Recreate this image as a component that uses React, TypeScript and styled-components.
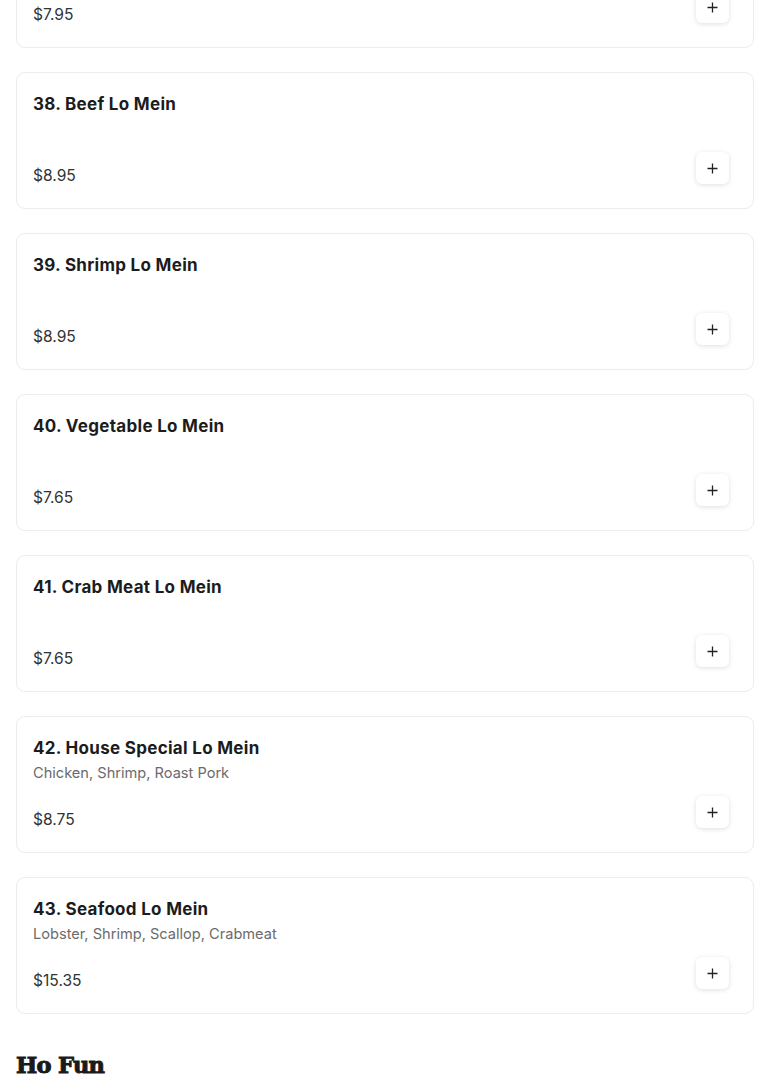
import React from "react";
import styled, { createGlobalStyle } from "styled-components";

const Global = createGlobalStyle`
  html, body { margin: 0; padding: 0; background: #fff; }
  body { font-family: "Inter", "Noto Sans", sans-serif; color: #222; overflow: hidden; }
`;

const Page = styled.div`
  padding: 0 16px;
  margin-top: -89px;
`;

const List = styled.div`
  display: flex;
  flex-direction: column;
  gap: 24px;
`;

const Card = styled.div`
  border: 1px solid #ececec;
  border-radius: 9px;
  background: #fff;
  padding: 19px 24px 24px 16px;
  display: flex;
  flex-direction: column;
`;

const Title = styled.h3`
  margin: 0;
  font-size: 17px;
  line-height: 24px;
  font-weight: 700;
  letter-spacing: 0.3px;
  color: #1c1c1c;
`;

const DescBox = styled.div`
  height: 36px;
  padding-top: 3px;
  box-sizing: border-box;
`;

const Desc = styled.p`
  margin: 0;
  font-size: 14.6px;
  line-height: 20px;
  color: #6b6b6b;
`;

const Row = styled.div`
  display: flex;
  justify-content: space-between;
  align-items: flex-start;
  height: 32px;
`;

const Price = styled.span`
  margin-top: 12px;
  font-size: 15.6px;
  line-height: 24px;
  color: #333;
`;

const AddButton = styled.button`
  width: 33px;
  height: 32px;
  border: none;
  border-radius: 6px;
  background: #fff;
  box-shadow: 0 1px 5px rgba(0, 0, 0, 0.13);
  display: flex;
  align-items: center;
  justify-content: center;
  padding: 0;
  cursor: pointer;
`;

const Section = styled.h2`
  margin: 24px 0 0;
  font-family: "DejaVu Serif", serif;
  font-weight: 700;
  font-size: 22.5px;
  line-height: 54px;
  letter-spacing: -0.7px;
  -webkit-text-stroke: 1px #1a1a1a;
  color: #1a1a1a;
`;

const items = [
  { name: "37. Chicken Lo Mein", desc: "", price: "$7.95" },
  { name: "38. Beef Lo Mein", desc: "", price: "$8.95" },
  { name: "39. Shrimp Lo Mein", desc: "", price: "$8.95" },
  { name: "40. Vegetable Lo Mein", desc: "", price: "$7.65" },
  { name: "41. Crab Meat Lo Mein", desc: "", price: "$7.65" },
  { name: "42. House Special Lo Mein", desc: "Chicken, Shrimp, Roast Pork", price: "$8.75" },
  { name: "43. Seafood Lo Mein", desc: "Lobster, Shrimp, Scallop, Crabmeat", price: "$15.35" },
];

const Plus = () => (
  <svg width="11" height="11" viewBox="0 0 11 11" fill="none">
    <path d="M5.5 0.5v10M0.5 5.5h10" stroke="#222" strokeWidth="1.3" />
  </svg>
);

export default function App() {
  return (
    <>
      <Global />
      <Page>
        <List>
          {items.map((it) => (
            <Card key={it.name}>
              <Title>{it.name}</Title>
              <DescBox>{it.desc && <Desc>{it.desc}</Desc>}</DescBox>
              <Row>
                <Price>{it.price}</Price>
                <AddButton aria-label="Add">
                  <Plus />
                </AddButton>
              </Row>
            </Card>
          ))}
        </List>
        <Section>Ho Fun</Section>
      </Page>
    </>
  );
}
